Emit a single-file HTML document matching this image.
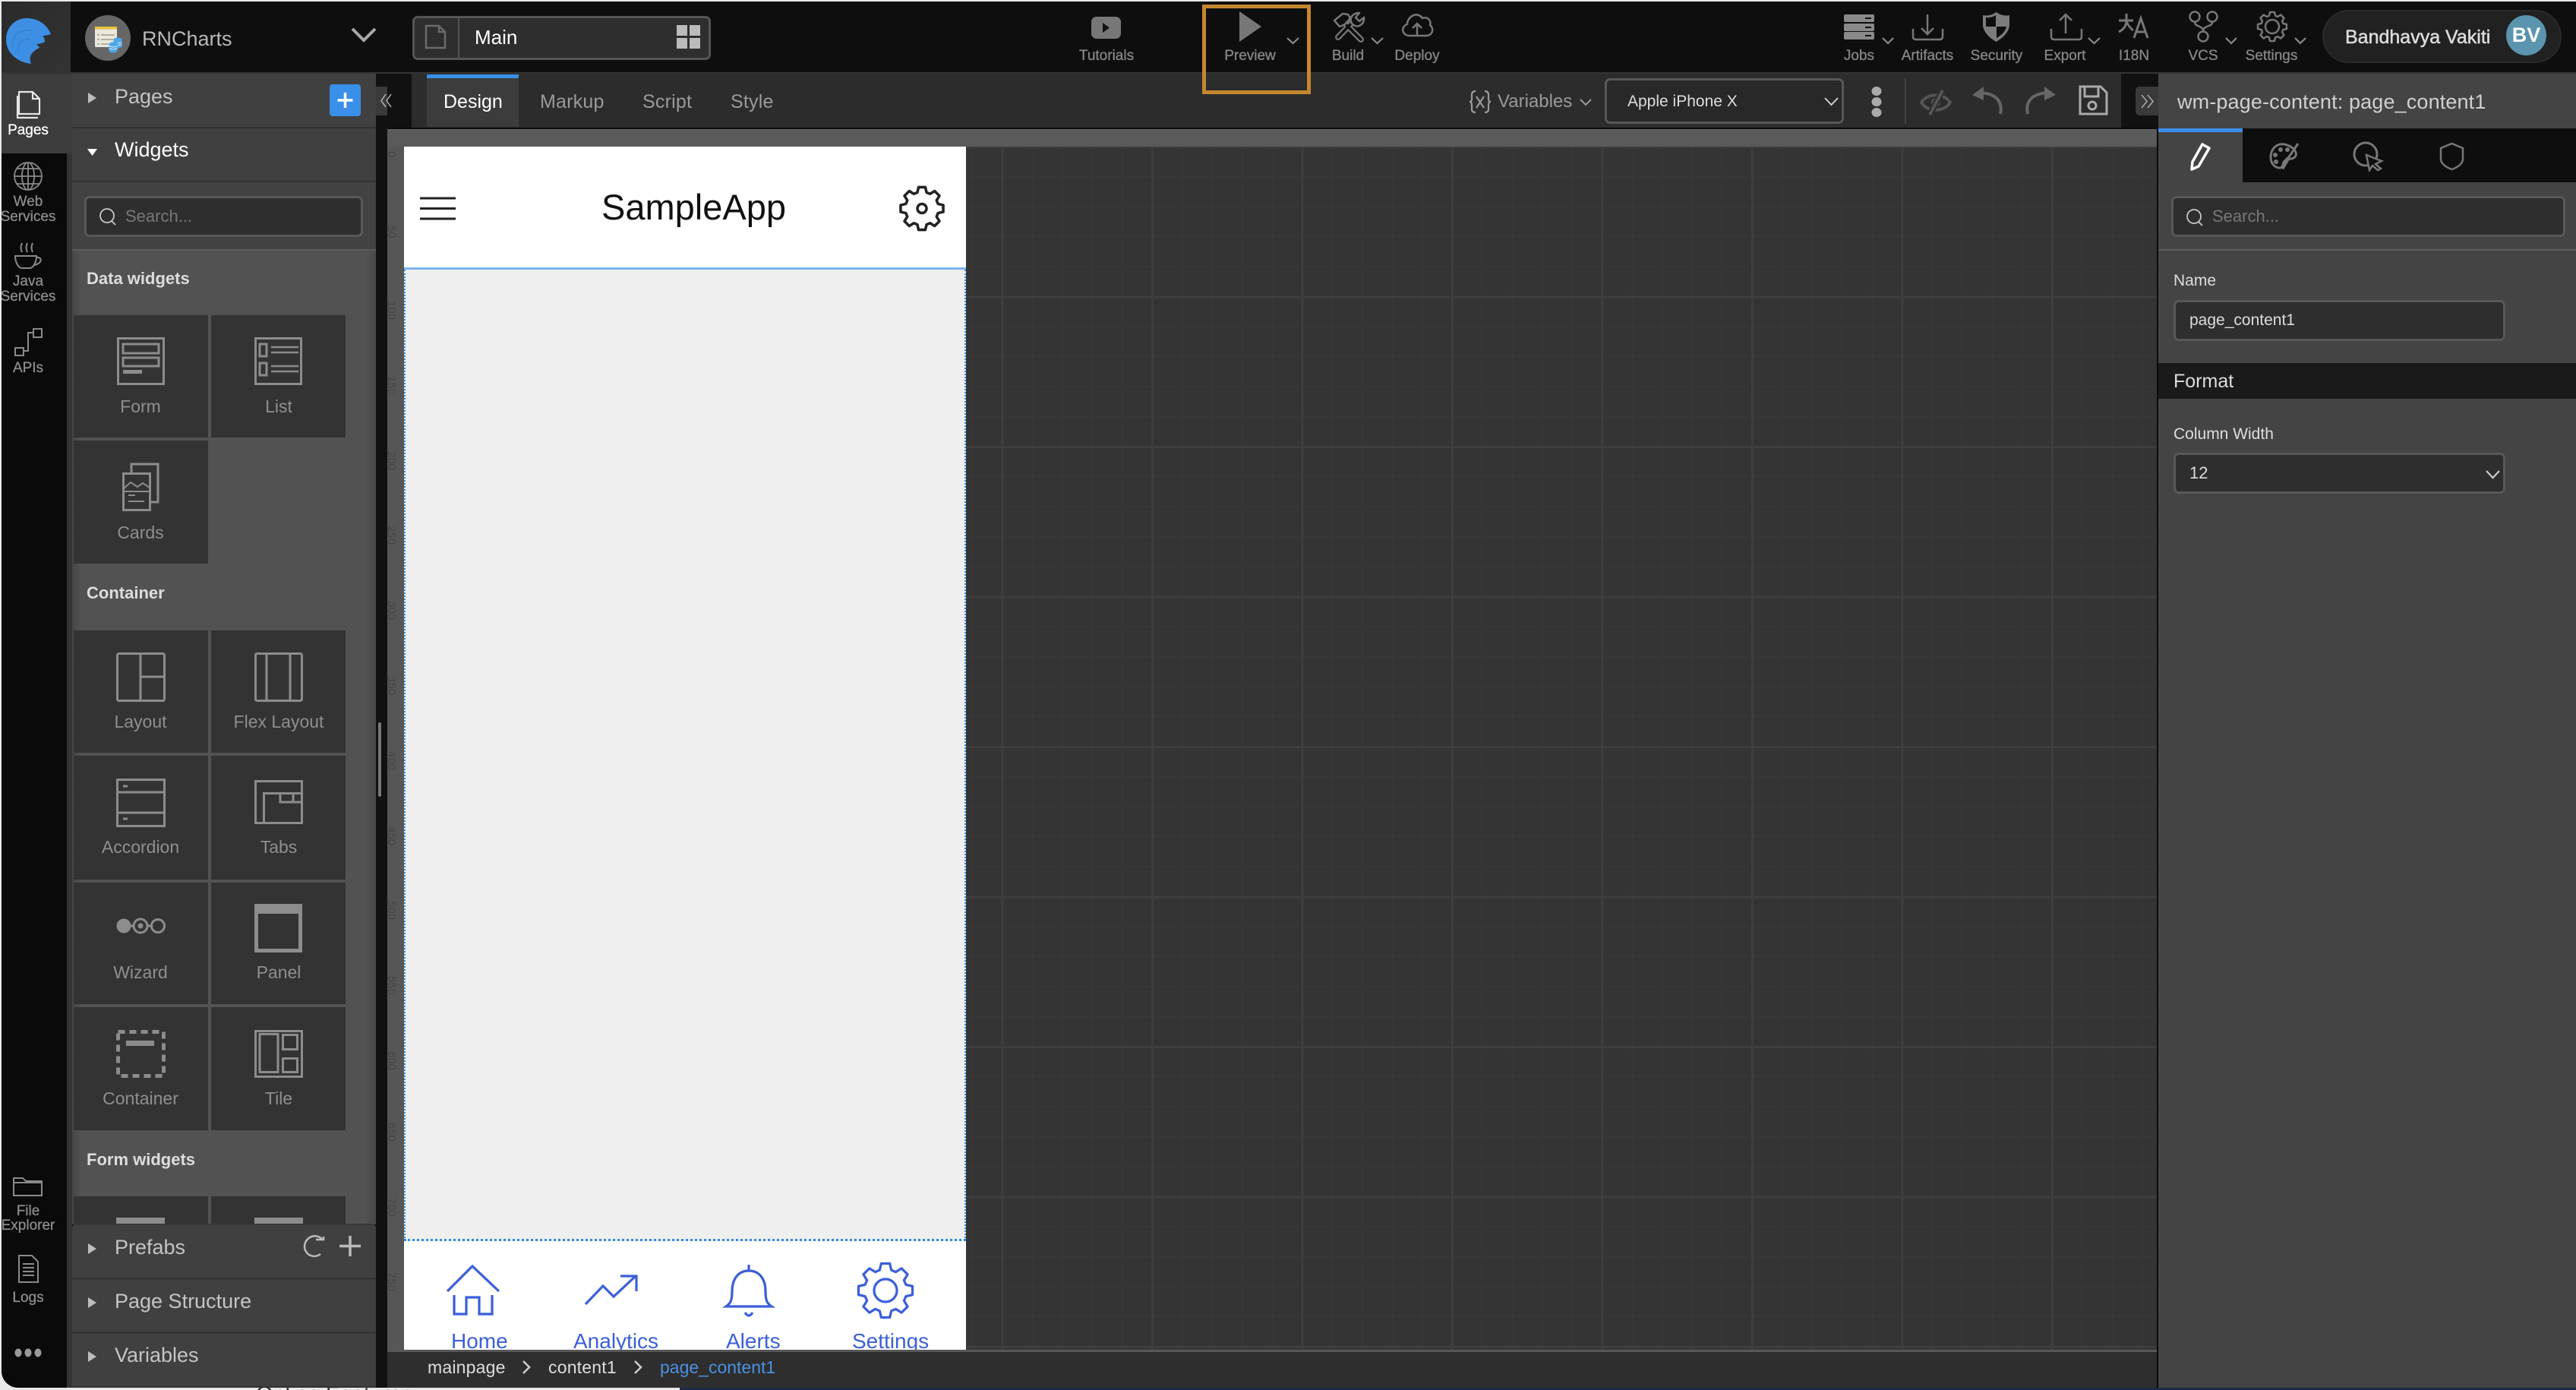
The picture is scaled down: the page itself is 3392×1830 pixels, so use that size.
<!DOCTYPE html>
<html lang="en">
<head>
<meta charset="utf-8">
<title>RNCharts Studio</title>
<style>
html,body{margin:0;padding:0;background:#e9e9e9;width:3392px;height:1830px;overflow:hidden;font-family:"Liberation Sans",Arial,sans-serif}
#win{position:absolute;left:2px;top:2px;width:3390px;height:1825px;border-bottom-left-radius:22px;overflow:hidden;background:#111}
#abs{position:absolute;left:-2px;top:-2px;width:3392px;height:1830px}
.b{position:absolute}
.t{position:absolute;white-space:nowrap;line-height:40px;height:40px}
.c{width:240px;text-align:center}
.rail{font-size:19px;color:#8f8f8f;-webkit-text-stroke:.25px #8f8f8f}
.tb{font-size:19px;color:#858585;-webkit-text-stroke:.35px #858585}
.tile{position:absolute;width:177px;background:#333}
.wl{font-size:23px;color:#8f8f8f}
.sec{font-size:22px;font-weight:bold;color:#ddd}
.ph{font-size:27px;color:#c4c4c4}
.tab{font-size:25px;color:#9a9a9a;letter-spacing:.2px}
.inp{position:absolute;background:#2e2e2e;border:3px solid #585858;border-radius:7px;box-sizing:border-box}
.rl{position:absolute;writing-mode:vertical-rl;font-size:15px;color:#454545;line-height:16px;left:507px;white-space:nowrap}
.nav{font-size:28px;color:#3b5fd9}
.bc{font-size:23px;color:#ddd}
svg{position:absolute;left:0;top:0}
</style>
</head>
<body>
<div class="b" style="left:0;top:1827px;width:3392px;height:3px;overflow:hidden">
  <div class="t" style="left:337px;top:-11px;font-size:29px;color:#333">Online Features</div>
  <div class="b" style="left:895px;top:0;width:2497px;height:3px;background:#1b2a4a"></div>
</div>
<div id="win"><div id="abs">

<!-- Top bar -->
<div class="b" style="left:0;top:0;width:3392px;height:95px;background:#0e0e0e"></div>
<div class="b" style="left:0;top:95px;width:3392px;height:2px;background:#333"></div>
<div class="b" style="left:0;top:0;width:93px;height:95px;background:linear-gradient(135deg,#2a2a2a,#333)"></div>
<div class="t" style="left:187px;top:31px;font-size:27px;color:#b8b8b8">RNCharts</div>
<div class="b" style="left:543px;top:21px;width:393px;height:58px;box-sizing:border-box;background:#2e2e2e;border:3px solid #555;border-radius:7px"></div>
<div class="b" style="left:603px;top:22px;width:2px;height:56px;background:#555"></div>
<div class="t" style="left:625px;top:29px;font-size:26px;color:#fff">Main</div>

<div class="t c tb" style="left:1337px;top:54px">Tutorials</div>
<div class="t c tb" style="left:1526px;top:54px">Preview</div>
<div class="t c tb" style="left:1655px;top:54px">Build</div>
<div class="t c tb" style="left:1746px;top:54px">Deploy</div>
<div class="t c tb" style="left:2328px;top:54px">Jobs</div>
<div class="t c tb" style="left:2418px;top:54px">Artifacts</div>
<div class="t c tb" style="left:2509px;top:54px">Security</div>
<div class="t c tb" style="left:2599px;top:54px">Export</div>
<div class="t c tb" style="left:2690px;top:54px">I18N</div>
<div class="t c tb" style="left:2781px;top:54px">VCS</div>
<div class="t c tb" style="left:2871px;top:54px">Settings</div>
<div class="b" style="left:3058px;top:13px;width:315px;height:70px;background:#212121;border:2px solid #2a2a2a;box-sizing:border-box;border-radius:35px"></div>
<div class="t" style="left:3088px;top:29px;font-size:25px;color:#ddd;-webkit-text-stroke:.5px #ddd">Bandhavya Vakiti</div>
<div class="b" style="left:3300px;top:20px;width:53px;height:53px;border-radius:50%;background:#5a94ae;color:#fff;font-size:27px;font-weight:bold;text-align:center;line-height:53px">BV</div>

<!-- Left rail -->
<div class="b" style="left:0;top:97px;width:88px;height:1733px;background:#0a0a0a"></div>
<div class="b" style="left:88px;top:97px;width:7px;height:1733px;background:#333"></div>
<div class="b" style="left:0;top:97px;width:95px;height:105px;background:#3c3c3c"></div>
<div class="t c rail" style="left:-83px;top:152px;color:#fff;-webkit-text-stroke:.3px #fff">Pages</div>
<div class="t c rail" style="left:-83px;top:246px">Web</div>
<div class="t c rail" style="left:-83px;top:266px">Services</div>
<div class="t c rail" style="left:-83px;top:351px">Java</div>
<div class="t c rail" style="left:-83px;top:371px">Services</div>
<div class="t c rail" style="left:-83px;top:465px">APIs</div>
<div class="t c rail" style="left:-83px;top:1575px">File</div>
<div class="t c rail" style="left:-83px;top:1594px">Explorer</div>
<div class="t c rail" style="left:-83px;top:1689px">Logs</div>

<!-- Left panel -->
<div class="b" style="left:95px;top:97px;width:400px;height:70px;background:#404040"></div>
<div class="b" style="left:95px;top:167px;width:400px;height:71px;background:#404040;border-top:2px solid #333;box-sizing:border-box"></div>
<div class="b" style="left:95px;top:238px;width:400px;height:91px;background:#424242;border-top:2px solid #343434;box-sizing:border-box"></div>
<div class="b" style="left:95px;top:328px;width:400px;height:2px;background:#5c5c5c"></div>
<div class="t ph" style="left:151px;top:107px">Pages</div>
<div class="b" style="left:434px;top:111px;width:41px;height:42px;background:#3a8fe8;border-radius:4px"></div>
<div class="t ph" style="left:151px;top:177px;color:#fff">Widgets</div>
<div class="inp" style="left:111px;top:258px;width:367px;height:54px"></div>
<div class="t" style="left:165px;top:265px;font-size:22px;color:#777">Search...</div>

<div class="b" style="left:95px;top:330px;width:400px;height:1282px;background:linear-gradient(90deg,#454545,#525252 12px,#525252 386px,#484848)"></div>
<div class="t sec" style="left:114px;top:347px">Data widgets</div>
<div class="t sec" style="left:114px;top:761px">Container</div>
<div class="t sec" style="left:114px;top:1507px">Form widgets</div>

<div class="tile" style="left:97px;top:415px;height:161px"></div>
<div class="tile" style="left:278px;top:415px;height:161px"></div>
<div class="tile" style="left:97px;top:580px;height:162px"></div>
<div class="tile" style="left:97px;top:830px;height:161px"></div>
<div class="tile" style="left:278px;top:830px;height:161px"></div>
<div class="tile" style="left:97px;top:995px;height:163px"></div>
<div class="tile" style="left:278px;top:995px;height:163px"></div>
<div class="tile" style="left:97px;top:1162px;height:160px"></div>
<div class="tile" style="left:278px;top:1162px;height:160px"></div>
<div class="tile" style="left:97px;top:1326px;height:162px"></div>
<div class="tile" style="left:278px;top:1326px;height:162px"></div>
<div class="tile" style="left:97px;top:1575px;height:36px"></div>
<div class="tile" style="left:278px;top:1575px;height:36px"></div>

<div class="t c wl" style="left:65px;top:515px">Form</div>
<div class="t c wl" style="left:247px;top:515px">List</div>
<div class="t c wl" style="left:65px;top:681px">Cards</div>
<div class="t c wl" style="left:65px;top:930px">Layout</div>
<div class="t c wl" style="left:247px;top:930px">Flex Layout</div>
<div class="t c wl" style="left:65px;top:1095px">Accordion</div>
<div class="t c wl" style="left:247px;top:1095px">Tabs</div>
<div class="t c wl" style="left:65px;top:1260px">Wizard</div>
<div class="t c wl" style="left:247px;top:1260px">Panel</div>
<div class="t c wl" style="left:65px;top:1426px">Container</div>
<div class="t c wl" style="left:247px;top:1426px">Tile</div>

<div class="b" style="left:95px;top:1611px;width:400px;height:71px;background:#404040;border-top:2px solid #383838;border-radius:6px 6px 0 0;box-sizing:border-box"></div>
<div class="b" style="left:95px;top:1682px;width:400px;height:71px;background:#404040;border-top:3px solid #333;box-sizing:border-box"></div>
<div class="b" style="left:95px;top:1753px;width:400px;height:72px;background:#404040;border-top:3px solid #333;box-sizing:border-box"></div>
<div class="b" style="left:95px;top:1825px;width:400px;height:5px;background:#333"></div>
<div class="t ph" style="left:151px;top:1622px">Prefabs</div>
<div class="t ph" style="left:151px;top:1693px">Page Structure</div>
<div class="t ph" style="left:151px;top:1764px">Variables</div>

<div class="b" style="left:495px;top:97px;width:15px;height:1733px;background:#111"></div>
<div class="b" style="left:498px;top:951px;width:4px;height:98px;background:#777;border-radius:2px"></div>
<div class="b" style="left:495px;top:114px;width:29px;height:38px;background:#3a3a3a;border-radius:0 5px 5px 0"></div>

<!-- Design toolbar -->
<div class="b" style="left:510px;top:97px;width:2332px;height:71px;background:#111"></div>
<div class="b" style="left:542px;top:97px;width:2251px;height:71px;background:#2c2c2c"></div>
<div class="b" style="left:562px;top:98px;width:121px;height:69px;background:#3c3c3c;border-top:5px solid #3a8fe8;box-sizing:border-box"></div>
<div class="t tab" style="left:584px;top:114px;color:#fff;letter-spacing:0">Design</div>
<div class="t tab" style="left:711px;top:114px">Markup</div>
<div class="t tab" style="left:846px;top:114px">Script</div>
<div class="t tab" style="left:962px;top:114px">Style</div>
<div class="t" style="left:1972px;top:114px;font-size:24px;color:#9a9a9a">Variables</div>
<div class="inp" style="left:2113px;top:103px;width:315px;height:60px;background:#282828"></div>
<div class="t" style="left:2143px;top:114px;font-size:21px;color:#ddd">Apple iPhone X</div>
<div class="b" style="left:2508px;top:103px;width:2px;height:60px;background:#444"></div>
<div class="b" style="left:2812px;top:114px;width:30px;height:38px;background:#3a3a3a;border-radius:5px 0 0 5px"></div>

<!-- Canvas -->
<div class="b" style="left:510px;top:168px;width:2332px;height:2px;background:#0a0a0a"></div>
<div class="b" style="left:510px;top:170px;width:2330px;height:23px;background:#5a5a5a;border-top:1px solid #666;box-sizing:border-box"></div>
<div class="b" style="left:510px;top:193px;width:22px;height:1585px;background:#565656"></div>
<div class="rl" style="top:199px">0</div>
<div class="rl" style="top:297px">50</div>
<div class="rl" style="top:396px">100</div>
<div class="rl" style="top:495px">150</div>
<div class="rl" style="top:594px">200</div>
<div class="rl" style="top:692px">250</div>
<div class="rl" style="top:791px">300</div>
<div class="rl" style="top:890px">350</div>
<div class="rl" style="top:989px">400</div>
<div class="rl" style="top:1088px">450</div>
<div class="rl" style="top:1186px">500</div>
<div class="rl" style="top:1285px">550</div>
<div class="rl" style="top:1384px">600</div>
<div class="rl" style="top:1478px">650</div>
<div class="rl" style="top:1577px">700</div>
<div class="rl" style="top:1675px">750</div>
<div class="b" style="left:532px;top:193px;width:2308px;height:1585px;background-color:#343434;
background-image:linear-gradient(90deg,#3e3e3e 3px,transparent 3px),linear-gradient(#3e3e3e 3px,transparent 3px),linear-gradient(90deg,#373737 2px,transparent 2px),linear-gradient(#373737 2px,transparent 2px);
background-size:197.5px 197.5px,197.5px 197.5px,39.5px 39.5px,39.5px 39.5px;
background-position:-3.5px 0,0 -1px,-3px 0,0 -1px"></div>
<div class="b" style="left:2840px;top:168px;width:2px;height:1662px;background:#0a0a0a"></div>

<!-- Phone -->
<div class="b" id="phone" style="left:532px;top:193px;width:740px;height:1584px;background:#fff;overflow:hidden">
  <div class="b" style="left:0;top:159px;width:740px;height:3px;background:#7db4f0"></div>
  <div class="b" style="left:0;top:162px;width:740px;height:1279px;background:#efefef;box-sizing:border-box;border-left:2px dotted #2a8de8;border-right:2px dotted #2a8de8;border-bottom:3px dotted #2a8de8"></div>
  <div class="t" style="left:260px;top:60px;font-size:47px;line-height:40px;color:#111">SampleApp</div>
  <div class="t nav" style="left:62px;top:1553px">Home</div>
  <div class="t nav" style="left:223px;top:1553px">Analytics</div>
  <div class="t nav" style="left:424px;top:1553px">Alerts</div>
  <div class="t nav" style="left:590px;top:1553px">Settings</div>
</div>

<!-- Breadcrumb -->
<div class="b" style="left:510px;top:1777px;width:2330px;height:53px;background:#2e2e2e;border-top:3px solid #585858;box-sizing:border-box"></div>
<div class="t bc" style="left:563px;top:1780px;letter-spacing:.2px">mainpage</div>
<div class="t bc" style="left:722px;top:1780px;letter-spacing:.2px">content1</div>
<div class="t bc" style="left:869px;top:1780px;color:#4a90e2">page_content1</div>

<!-- Right panel -->
<div class="b" style="left:2842px;top:97px;width:550px;height:1733px;background:#444"></div>
<div class="t" style="left:2867px;top:114px;font-size:27px;letter-spacing:.14px;color:#d0d0d0">wm-page-content: page_content1</div>
<div class="b" style="left:2842px;top:169px;width:550px;height:71px;background:#0e0e0e"></div>
<div class="b" style="left:2842px;top:169px;width:111px;height:71px;background:#444;border-top:5px solid #3a8fe8;box-sizing:border-box"></div>
<div class="inp" style="left:2859px;top:258px;width:519px;height:54px"></div>
<div class="t" style="left:2913px;top:265px;font-size:22px;color:#777">Search...</div>
<div class="b" style="left:2842px;top:328px;width:550px;height:2px;background:#5c5c5c"></div>
<div class="t" style="left:2862px;top:350px;font-size:21px;color:#ddd">Name</div>
<div class="inp" style="left:2862px;top:395px;width:437px;height:54px"></div>
<div class="t" style="left:2883px;top:402px;font-size:21px;color:#ddd">page_content1</div>
<div class="b" style="left:2842px;top:478px;width:550px;height:47px;background:#1a1a1a"></div>
<div class="t" style="left:2862px;top:482px;font-size:25px;color:#ddd">Format</div>
<div class="t" style="left:2862px;top:552px;font-size:21px;color:#ddd">Column Width</div>
<div class="inp" style="left:2862px;top:596px;width:437px;height:54px"></div>
<div class="t" style="left:2883px;top:603px;font-size:22px;color:#ddd">12</div>

<!-- Icons -->
<svg width="3392" height="1830" viewBox="0 0 3392 1830" fill="none">
<defs>
<path id="gear" stroke-linejoin="round" d="M-4.27-14.9L-3.13-19.75L3.13-19.75L4.27-14.9L7.51-13.56L11.76-16.18L16.18-11.76L13.56-7.51L14.9-4.27L19.75-3.13L19.75 3.13L14.9 4.27L13.56 7.51L16.18 11.76L11.76 16.18L7.51 13.56L4.27 14.9L3.13 19.75L-3.13 19.75L-4.27 14.9L-7.51 13.56L-11.76 16.18L-16.18 11.76L-13.56 7.51L-14.9 4.27L-19.75 3.13L-19.75-3.13L-14.9-4.27L-13.56-7.51L-16.18-11.76L-11.76-16.18L-7.51-13.56Z"/>
</defs>

<!-- logo -->
<path fill="#3d8fe3" d="M35 24C50 24 62 32 67 45C64 46 59 47 56 47C58 49 59 52 59 55C56 57 51 58 48 58C50 60 51 61 52 63C47 65 42 69 40 74C39 78 40 81 41 84C23 82 8 70 8 52C8 36 20 24 35 24Z"/>
<path stroke="#347fd0" stroke-width="1.300" d="M17 62C15 48 24 38 43 40M24 68C22 56 30 50 40 52"/>

<!-- avatar -->
<circle cx="142" cy="50" r="30" fill="#666"/>
<rect x="125" y="35" width="29" height="27" rx="1.5" fill="#ece8dc"/>
<rect x="125" y="35" width="29" height="3.5" fill="#e8c23c"/>
<path stroke="#8a8a80" stroke-width="1.3" d="M128 46h3M133 46h18M128 52h3M133 52h16M128 58h3M133 58h10"/>
<g fill="#4aa6ea"><ellipse cx="155" cy="52" rx="5.5" ry="2.5"/><rect x="149.500" y="52" width="11" height="9"/><ellipse cx="155" cy="61" rx="5.500" ry="2.500"/><ellipse cx="149" cy="58" rx="5.500" ry="2.500"/><rect x="143.500" y="58" width="11" height="9"/><ellipse cx="149" cy="67" rx="5.500" ry="2.500"/></g>
<path stroke="#dff0fc" stroke-width="1" d="M143.500 60.500q5.500 3 11 0M143.500 63.500q5.500 3 11 0M155 56q3 1 5.500-.5M155.500 59q3 1 5-.5"/>

<!-- project chevron, main box icons -->
<path stroke="#a8a8a8" stroke-width="4" d="M464 38L479 53L494 38"/>
<path stroke="#6a6a6a" stroke-width="2.500" d="M561 34H578L586 42V63H561ZM578 34V42H586"/>
<g fill="#bbb"><rect x="891" y="33" width="14" height="14"/><rect x="908" y="33" width="14" height="14"/><rect x="891" y="50" width="14" height="14"/><rect x="908" y="50" width="14" height="14"/></g>

<!-- rail icons -->
<path stroke="#e6e6e6" stroke-width="2.200" d="M25 121H43L52 130V150H25ZM43 121V130H52M23 126V155H50"/>
<g stroke="#8a8a8a" stroke-width="1.800"><circle cx="37" cy="232" r="18"/><ellipse cx="37" cy="232" rx="8" ry="18"/><path d="M37 214V250M19 232H55M22 222H52M22 242H52"/></g>
<g stroke="#8a8a8a" stroke-width="2"><path d="M29 320Q26 326 29 332M36 320Q33 326 36 332M43 320Q40 326 43 332"/><path d="M20 337H48C48 345 44 353 39 353H29C24 353 20 345 20 337Z"/><path d="M48 339C56 338 56 347 45 349"/></g>
<g stroke="#8a8a8a" stroke-width="2"><rect x="44" y="433" width="11" height="11"/><rect x="20" y="458" width="11" height="10"/><path d="M31 462H37V438H44"/></g>
<path stroke="#8a8a8a" stroke-width="2" d="M18 1551H30L34 1555H55V1574H18Z" /><path stroke="#8a8a8a" stroke-width="2" d="M18 1557H55"/>
<path stroke="#8a8a8a" stroke-width="2" d="M25 1653H42L50 1661V1688H25Z"/><path stroke="#8a8a8a" stroke-width="2" d="M30 1664H45M30 1669H45M30 1674H45M30 1679H45"/>
<g fill="#9a9a9a"><ellipse cx="24" cy="1781" rx="4.500" ry="5.500"/><ellipse cx="37" cy="1781" rx="4.500" ry="5.500"/><ellipse cx="50" cy="1781" rx="4.500" ry="5.500"/></g>

<!-- panel triangles and search -->
<g fill="#bdbdbd"><path d="M116 122L127 129L116 136Z"/><path d="M116 1637L127 1644L116 1651Z"/><path d="M116 1708L127 1715L116 1722Z"/><path d="M116 1779L127 1786L116 1793Z"/></g>
<path fill="#fff" d="M115 196H128L121.500 205Z"/>
<path stroke="#fff" stroke-width="3.500" d="M454.500 122V142M444.500 132H464.500"/>
<path stroke="#a8a8a8" stroke-width="1.600" d="M508 124L502 132.500L508 141M515 124L509 132.500L515 141"/>
<path stroke="#a8a8a8" stroke-width="1.600" d="M2820 125L2827 133.500L2820 142M2828 125L2835 133.500L2828 142"/>
<g stroke="#c8c8c8" stroke-width="1.800"><circle cx="141" cy="284" r="9"/><path d="M147 291L152 296"/><circle cx="2889" cy="285" r="9"/><path d="M2895 292L2900 297"/></g>
<path stroke="#bbb" stroke-width="2.500" d="M424 1631C413 1622 401 1631 401 1641C401 1651 412 1658 422 1651M416 1632H426V1628"/>
<path stroke="#bbb" stroke-width="3.500" d="M461 1627V1654M447 1640.500H475"/>

<!-- tile icons -->
<g stroke="#8c8c8c" stroke-width="3">
<rect x="155.500" y="445.500" width="60" height="60"/><rect x="162" y="453" width="47" height="12"/><rect x="162" y="471" width="47" height="11"/>
<rect x="336.500" y="445.500" width="60" height="60"/><rect x="342" y="453" width="9" height="16"/><rect x="342" y="478" width="9" height="16"/>
<path stroke-width="2.500" d="M357 457H393M357 464H393M357 482H393M357 489H393"/>
<path d="M173 622V611H208V661H198"/><rect x="162.500" y="623.500" width="35" height="48"/><path stroke-width="2" d="M163 643L172 635L181 641L188 636L197 642M163 647H197"/><path stroke-width="2" d="M169 652H178M169 660H190"/>
<rect x="154.500" y="860.500" width="62" height="62" rx="2"/><path d="M185 860V922M185 891H216"/>
<rect x="336.500" y="860.500" width="61" height="62" rx="2"/><path d="M351 860V922M382 860V922"/>
<rect x="154.500" y="1026.500" width="62" height="61"/><path d="M154 1043H216M154 1070H216M162 1035H168M162 1078H168"/>
<rect x="336.500" y="1028.500" width="61" height="55"/><path d="M347.500 1084V1044.500H397M369 1044.500V1056H397M386 1044.500V1056"/>
<circle cx="185" cy="1219" r="9"/><circle cx="208" cy="1219" r="8.500"/><path d="M171 1219H176M194 1219H199"/>
<rect x="342" y="1361.500" width="24" height="50"/><rect x="372.500" y="1362.500" width="19" height="19"/><rect x="372.500" y="1393.500" width="19" height="18"/><rect x="336.500" y="1357.500" width="61" height="60"/>
</g>
<g fill="#8c8c8c"><rect x="162" y="487" width="25" height="5"/><circle cx="163" cy="1219" r="9.500"/><circle cx="185" cy="1219" r="3.500"/><rect x="335" y="1190" width="63" height="13"/><rect x="166" y="1370" width="37" height="7"/><rect x="153" y="1603" width="64" height="8"/><rect x="335" y="1603" width="64" height="8"/></g>
<rect x="337.500" y="1192.500" width="58" height="59" stroke="#8c8c8c" stroke-width="5"/>
<rect x="155.500" y="1358.500" width="60" height="58" stroke="#8c8c8c" stroke-width="5" stroke-dasharray="9 6"/>

<!-- Toolbar icons -->
<rect x="1437" y="22" width="39" height="29" rx="7" fill="#777"/><path fill="#111" d="M1452 30L1461 36.500L1452 43Z"/>
<rect x="1585.500" y="8.500" width="138" height="113" stroke="#c5872e" stroke-width="5"/>
<path fill="#777" d="M1632 15L1661 35L1632 55Z"/>
<path stroke="#8a8a8a" stroke-width="2.200" d="M1695 50L1702.500 57L1710 50M1806 50L1813.500 57L1821 50M2479 50L2486 57L2493 50M2750 50L2757.500 57L2765 50M2931 50L2938 57L2945 50M3022 50L3029 57L3036 50"/>
<g stroke-linecap="round" stroke-linejoin="round">
<path stroke="#777" stroke-width="8" d="M1768 28L1792 52M1762 49L1782 28"/><path stroke="#0e0e0e" stroke-width="3.500" d="M1768 28L1792 52M1762 49L1782 28"/>
<path stroke="#777" stroke-width="2.500" fill="#0e0e0e" d="M1757 27L1768 18L1775 19L1778 24L1771 32L1764 35Z"/>
<path stroke="#777" stroke-width="2.500" fill="#0e0e0e" d="M1780 31C1776 24 1781 17 1790 17L1785 23L1790 28L1796 23C1797 31 1790 36 1784 34Z"/>
</g>
<path stroke="#777" stroke-width="2.500" d="M1856 47C1846 47 1844 35 1853 32C1853 22 1866 14 1873 24C1881 21 1885 29 1883 33C1889 38 1886 47 1878 47ZM1866 47V32M1860 37L1866 31L1872 37"/>

<path stroke="#9a9a9a" stroke-width="2.200" d="M1943 120Q1938 120 1938 125V130Q1938 134 1935 134Q1938 134 1938 138V144Q1938 148 1943 148M1955 120Q1960 120 1960 125V130Q1960 134 1963 134Q1960 134 1960 138V144Q1960 148 1955 148M1944 127L1954 142M1954 127L1944 142"/>
<path stroke="#9a9a9a" stroke-width="2" d="M2081 131L2088 138L2095 131"/>
<path stroke="#ccc" stroke-width="2" d="M2403 129L2411.500 138L2420 129"/>
<g fill="#aaa"><ellipse cx="2471" cy="120" rx="6.500" ry="6"/><ellipse cx="2471" cy="134" rx="6.500" ry="6"/><ellipse cx="2471" cy="148" rx="6.500" ry="6"/></g>
<path stroke="#555" stroke-width="4" d="M2530 135C2538 122 2560 122 2568 135C2560 148 2538 148 2530 135Z"/><circle cx="2549" cy="135" r="6" fill="#555"/>
<path stroke="#2c2c2c" stroke-width="8" d="M2541 151L2558 119"/><path stroke="#555" stroke-width="4" d="M2541 151L2558 119"/>
<path stroke="#666" stroke-width="4" d="M2604 122C2624 122 2638 130 2634 150"/><path fill="#666" d="M2597 125L2612 114L2612 132Z"/>
<path stroke="#666" stroke-width="4" d="M2700 122C2680 122 2666 130 2670 150"/><path fill="#666" d="M2707 125L2692 114L2692 132Z"/>
<path stroke="#aaa" stroke-width="3" d="M2739 114H2766L2774 122V150H2739ZM2745 114V127H2763V114"/><circle cx="2755" cy="139" r="5" stroke="#aaa" stroke-width="3"/>

<!-- right toolbar icons -->
<g fill="#8a8a8a"><rect x="2428" y="19" width="40" height="10" rx="2"/><rect x="2428" y="31" width="40" height="10" rx="2"/><rect x="2428" y="42" width="40" height="10" rx="2"/></g>
<path stroke="#111" stroke-width="2" d="M2456 24H2464M2456 36H2464M2456 47H2464"/>
<path stroke="#777" stroke-width="2.500" d="M2538 19V44M2530 37L2538 45L2546 37M2519 38V48Q2519 52 2523 52H2554Q2558 52 2558 48V38"/>
<path fill="#7c7c7c" d="M2611 20Q2620 22 2628.500 16Q2637 22 2646 20V34Q2644 46 2628.500 55Q2613 46 2611 34Z"/>
<path fill="#0e0e0e" d="M2615 23Q2622 24 2628 20V35H2615ZM2629 35H2642Q2640 44 2629 50Z"/>
<path stroke="#777" stroke-width="2.500" d="M2720 44V20M2712 27L2720 19L2728 27M2701 38V48Q2701 52 2705 52H2737Q2741 52 2741 48V38"/>
<path stroke="#777" stroke-width="3" d="M2790 27H2809M2800 18V27C2800 34 2796 39 2790 42M2800 28C2802 33 2805 37 2809 40M2810 50L2819 24L2828 50M2813 42H2825"/>
<g stroke="#777" stroke-width="2.500"><circle cx="2890" cy="22" r="6.500"/><circle cx="2913" cy="22" r="6.500"/><circle cx="2901" cy="48" r="6.500"/><path d="M2890 29C2890 36 2901 33 2901 41M2913 29C2913 36 2901 33 2901 41"/></g>
<use href="#gear" transform="translate(2992 35) scale(.96)" stroke="#777" stroke-width="2.600"/>
<circle cx="2992" cy="35" r="9" stroke="#777" stroke-width="2.500"/>

<!-- right panel tab icons -->
<path stroke="#fff" stroke-width="3.500" stroke-linejoin="round" d="M2900 190L2909 195L2895 219L2886 223L2887 213Z"/>
<path stroke="#777" stroke-width="3" d="M3008 190C2997 188 2990 197 2990 207C2990 216 2996 221 3002 221C3007 221 3005 215 3008 212C3012 208 3020 211 3023 205C3025 199 3018 192 3008 190Z"/>
<path stroke="#777" stroke-width="3" d="M3026 189L3013 208"/><path stroke="#777" stroke-width="5" d="M3013 208L3005 222"/>
<g fill="#777"><circle cx="3003" cy="197" r="3"/><circle cx="3012" cy="197" r="3"/><circle cx="2996" cy="204" r="3"/><circle cx="2997" cy="213" r="3"/></g>
<circle cx="3115" cy="203" r="15" stroke="#777" stroke-width="3"/>
<path stroke="#777" stroke-width="2.500" fill="#0e0e0e" d="M3116 204L3136 212L3128 216L3135 222L3131 224L3124 218L3120 224Z"/>
<path stroke="#777" stroke-width="2.500" d="M3228.500 189L3243 195V210Q3242 218 3228.500 223Q3215 218 3214 210V195Z"/>
<path stroke="#ccc" stroke-width="2.200" d="M3274 620L3282.500 629L3291 620"/>

<!-- phone icons -->
<path stroke="#222" stroke-width="3" d="M553 261H600M553 274.500H600M553 288H600"/>
<use href="#gear" transform="translate(1214 274.500) scale(1.42)" stroke="#222" stroke-width="2.500"/>
<circle cx="1214" cy="274.500" r="6" stroke="#222" stroke-width="3.500"/>
<g stroke="#3b5fd9" stroke-width="3.200">
<path d="M589 1700L622 1667L657 1700"/>
<path d="M598 1705V1730H614V1708H631V1730H648V1705"/>
<path d="M771 1717L794 1693L808 1707L837 1680M817 1680H838V1700"/>
<path d="M956 1720C962 1716 964 1712 964 1700C964 1684 972 1673 986 1673C1000 1673 1008 1684 1008 1700C1008 1712 1010 1716 1016 1720ZM986 1665V1673M981 1728Q986 1736 991 1728"/>
</g>
<use href="#gear" transform="translate(1166 1699) scale(1.8)" stroke="#3b5fd9" stroke-width="1.800"/>
<circle cx="1166" cy="1699" r="15" stroke="#3b5fd9" stroke-width="3.200"/>

<!-- breadcrumb chevrons -->
<path stroke="#ccc" stroke-width="2.500" d="M689 1792L697 1800L689 1808M836 1792L844 1800L836 1808"/>
</svg>

</div></div>
</body>
</html>
